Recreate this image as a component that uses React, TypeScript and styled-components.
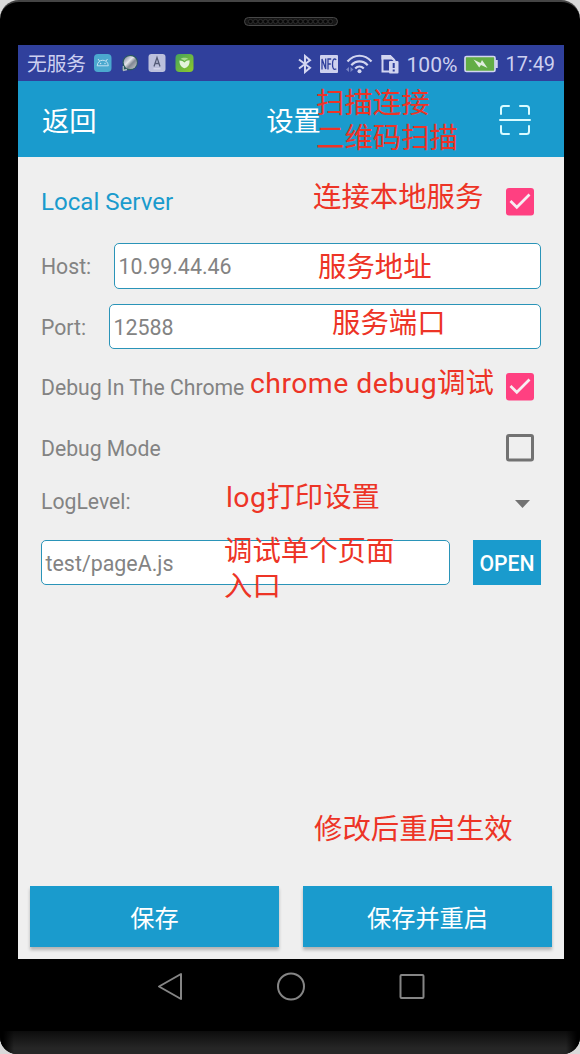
import React from 'react';
import styled, { createGlobalStyle } from 'styled-components';

const BLUE = '#1a9bcd';
const CJK = "Roboto, 'Noto Sans CJK SC', sans-serif";

const GlobalStyle = createGlobalStyle`
  * { box-sizing: border-box; }
  body { margin: 0; background: #d9d9d9; }
  svg { display: block; flex: none; }
`;

const Phone = styled.main`
  position: relative;
  width: 580px;
  height: 1054px;
  display: flex;
  flex-direction: column;
  overflow: hidden;
  background: #000;
  border-top: 2px solid #444;
  border-radius: 19px 19px 17px 17px;
  font-family: ${CJK};
`;

const Earpiece = styled.div`
  height: 43px;
  display: flex;
  justify-content: center;
  padding-top: 15px;
  padding-left: 2px;
`;

const Screen = styled.section`
  width: 546px;
  height: 914px;
  margin-left: 18px;
  display: flex;
  flex-direction: column;
  background: #efefef;
`;

const StatusBar = styled.div`
  height: 36px;
  display: flex;
  justify-content: space-between;
  align-items: center;
  padding: 1px 9px 0 9px;
  background: #30409c;
  color: #cdd0f0;
  white-space: nowrap;
`;

const StatusGroup = styled.div<{ $gap: number }>`
  display: flex;
  align-items: center;
  gap: ${(p) => p.$gap}px;
`;

const Carrier = styled.span`
  font-size: 19.7px;
  line-height: 32px;
  padding-top: 2px;
  margin-right: -3px;
`;

const StatusText = styled.span<{ $size: number }>`
  font-size: ${(p) => p.$size}px;
  padding-top: 1px;
`;

const Header = styled.header`
  height: 76px;
  display: grid;
  grid-template-columns: 1fr auto 1fr;
  align-items: center;
  padding: 0 33px 0 24px;
  background: ${BLUE};
  color: #fff;
  font-size: 27.3px;
`;

const Title = styled.span`
  margin-left: 14px;
`;

const ScanSlot = styled.div`
  justify-self: end;
  padding-top: 1px;
`;

const Form = styled.div`
  flex: 1;
  padding: 15px 23px 0;
  display: flex;
  flex-direction: column;
`;

const Row = styled.div<{ $height: number; $top?: number; $end?: number }>`
  height: ${(p) => p.$height}px;
  margin-top: ${(p) => p.$top ?? 0}px;
  padding-right: ${(p) => p.$end ?? 0}px;
  display: flex;
  align-items: center;
  justify-content: space-between;
`;

const Label = styled.label<{ $heading?: boolean }>`
  color: ${(p) => (p.$heading ? BLUE : '#838383')};
  font-size: ${(p) => (p.$heading ? 24.1 : 21.2)}px;
  padding-top: ${(p) => (p.$heading ? 0 : 1)}px;
  white-space: nowrap;
`;

const Field = styled.div<{ $width: number }>`
  width: ${(p) => p.$width}px;
  height: 100%;
  display: flex;
  align-items: center;
  padding: 1px 0 0 3.5px;
  background: #fff;
  border: 1.5px solid #2a94b8;
  border-radius: 5px;
  color: #838383;
  font-size: 21.4px;
`;

const OpenButton = styled.button`
  width: 68px;
  height: 45px;
  padding: 1px 0 0;
  border: 0;
  background: ${BLUE};
  color: #fff;
  font: 500 21.2px ${CJK};
`;

const Footer = styled.footer`
  display: flex;
  gap: 24px;
  padding: 0 12px 12px;
`;

const ActionButton = styled.button`
  flex: 1;
  height: 61px;
  border: 0;
  padding: 0 0 1px;
  background: ${BLUE};
  box-shadow: 0 3px 3px rgba(0, 0, 0, 0.25);
  color: #fff;
  font: 400 24.2px ${CJK};
`;

const NavBar = styled.nav`
  height: 72px;
  display: flex;
  justify-content: center;
  gap: 94px;
  padding-top: 12px;
  padding-left: 2px;
`;

const Chin = styled.div`
  flex: 1;
  background:
    linear-gradient(90deg, #000 3px, transparent 14px, transparent 566px, #000 577px),
    linear-gradient(#0c0c0c, #262626 75%);
`;

const Note = styled.p<{ $x: number; $y: number }>`
  position: absolute;
  left: ${(p) => p.$x}px;
  top: ${(p) => p.$y - 5}px;
  margin: 0;
  color: #ed3426;
  font: 400 28.4px/35px 'Noto Sans CJK SC', sans-serif;
  white-space: pre;
`;

const Latin = styled.span`
  font-family: Roboto, sans-serif;
  font-size: 28.4px;
  letter-spacing: 0.45px;
`;

function Speaker() {
  return (
    <svg width="94" height="9" viewBox="0 0 94 9">
      <rect x=".5" y=".5" width="93" height="8" rx="4" fill="#161616" stroke="#484848" />
      {Array.from({ length: 17 }, (_, i) => (
        <circle key={i} cx={6.5 + i * 5} cy="4.5" r="2.1" fill="#060606" stroke="#333" strokeWidth=".8" />
      ))}
    </svg>
  );
}

function AppIcons() {
  return (
    <svg width="101" height="20" viewBox="0 0 101 20">
      <defs>
        <linearGradient id="metal" x1="0" y1="0" x2="1" y2="1">
          <stop offset="0" stopColor="#6d7390" />
          <stop offset=".4" stopColor="#e4e6ea" />
          <stop offset=".6" stopColor="#808792" />
          <stop offset="1" stopColor="#cdd1d4" />
        </linearGradient>
        <linearGradient id="leaf" x1="0" y1="0" x2="1" y2="1">
          <stop offset="0" stopColor="#46a35c" />
          <stop offset="1" stopColor="#8fc92a" />
        </linearGradient>
      </defs>
      <rect x="1" y="0" width="17.5" height="18" rx="4" fill="#4ba9cf" />
      <path d="M4.200 11.800c.3-7.400 10.800-7.400 11.100 0zM6.500 7 5 5M13 7l1.500-2" fill="none" stroke="#c2e2f2" strokeWidth="1" />
      <circle cx="7.600" cy="9.500" r=".7" fill="#c2e2f2" />
      <circle cx="12" cy="9.500" r=".7" fill="#c2e2f2" />
      <path d="M29 16.500 30 11C28 5 33 .5 38.500 1c5.500.6 7.500 6 5.600 10.500-2 5-8 5.500-10.500 4.200z" fill="#2b5c5c" />
      <circle cx="37.300" cy="8.500" r="6.600" fill="url(#metal)" />
      <path d="M30.300 12v4.500M30 16.500l4-1" stroke="#aeb7c3" strokeWidth="1.300" />
      <rect x="55.500" y="0" width="17" height="18" rx="3" fill="#bcc0dc" />
      <path d="m61 12.500 3-9 3 9M62 9.500h4" fill="none" stroke="#555c78" strokeWidth="1.300" />
      <path d="M60.500 14.800h7" stroke="#dedff0" />
      <rect x="82.500" y="0" width="18" height="18" rx="4" fill="url(#leaf)" />
      <path d="M86.500 6.500c2.500 0 3.500.8 5 2 1.500-1.800 2.500-2.200 5-2.300.5 4-1.300 7-5 8-3.700-1-5.200-4-5-7.700z" fill="#e4f4dc" />
      <path d="M87.500 5c1.500-1.500 6-1.700 8 0-1.500.2-3 .8-4 2-1-1-2.500-1.800-4-2z" fill="#a8db8e" />
    </svg>
  );
}

function Bluetooth() {
  return (
    <svg width="16" height="20" viewBox="0 0 16 20">
      <path d="m2 5.500 11 8.300L8 18V2l5 4.200L2 14.500" fill="none" stroke="#d2d5f0" strokeWidth="2" />
    </svg>
  );
}

function Nfc() {
  return (
    <svg width="18" height="18" viewBox="0 0 18 18">
      <rect width="18" height="18" rx="1" fill="#ced1ee" />
      <path d="M2 14.500V4l3.700 10V3.500M8 14.500V4h3.200M8 9h2.800M16.300 4.700c-2.600-2-3.800.5-3.800 4.500s1.200 6.400 3.800 4.500" fill="none" stroke="#30409c" strokeWidth="1.300" />
    </svg>
  );
}

function Wifi() {
  return (
    <svg width="28" height="20" viewBox="0 0 28 20">
      <g fill="none" stroke="#d2d5f0" strokeWidth="2.200">
        <path d="M2.500 7.500c7-7.700 17-7.700 24 0M6.300 11.200c4.800-5 11.600-5 16.400 0M10.200 14.500c2.500-2.500 6-2.500 8.600 0" />
      </g>
      <circle cx="14.500" cy="17.300" r="2" fill="#d2d5f0" />
      <path d="M4 13v5l-3-2.500zM5.500 13v5l3-2.500z" fill="#7783c3" />
    </svg>
  );
}

function SimAlert() {
  return (
    <svg width="19" height="20" viewBox="0 0 19 20">
      <path d="M9 17.500H2.500V2h7.500L14.500 6.500V8" fill="none" stroke="#d2d5f0" strokeWidth="2" />
      <path d="M1.500 1h9l4.500 4.500H1.500z" fill="#d2d5f0" />
      <rect x="9" y="7" width="9.500" height="12.500" rx="1" fill="#d2d5f0" />
      <path d="M13.700 9v5M13.700 15.500v2" stroke="#30409c" strokeWidth="2" />
    </svg>
  );
}

function Battery() {
  return (
    <svg width="34" height="18" viewBox="0 0 34 18">
      <rect x="1" y="1.500" width="30" height="15" rx="1.500" fill="#62ad45" stroke="#d2d5f0" strokeWidth="1.700" />
      <path d="M32.500 5v8" stroke="#d2d5f0" strokeWidth="2.500" />
      <path d="m9.500 4.500 7 3.500L18 5l5.500 8-6.500-3-1.800 2.500z" fill="#dfeddd" />
    </svg>
  );
}

function ScanIcon() {
  return (
    <svg width="32" height="32" viewBox="0 0 32 32" fill="none" stroke="#d8fbff" strokeWidth="2" strokeLinecap="round">
      <path d="M2 10V4.500C2 3 3 2 4.500 2H10M21 2h6.500C29 2 30 3 30 4.500V10M2 22v5.500C2 29 3 30 4.500 30H10M21 30h6.500c1.500 0 2.500-1 2.500-2.500V22M1 16h30" />
    </svg>
  );
}

function Checkbox({ checked = false }: { checked?: boolean }) {
  return (
    <svg width="28" height="28" viewBox="0 0 28 28">
      {checked ? (
        <>
          <rect width="28" height="27.500" rx="3" fill="#ff4081" />
          <path d="m4.500 13 6.300 6.300L23.500 6.500" fill="none" stroke="#f7eef2" strokeWidth="2.700" />
        </>
      ) : (
        <rect x="1.500" y="1.500" width="25" height="24.500" rx="1.500" fill="none" stroke="#727272" strokeWidth="3" />
      )}
    </svg>
  );
}

const Caret = styled.svg`
  margin-top: 5px;
`;

export default function App() {
  return (
    <>
      <GlobalStyle />
      <Phone>
        <Earpiece><Speaker /></Earpiece>
        <Screen>
          <StatusBar>
            <StatusGroup $gap={10}>
              <Carrier>无服务</Carrier>
              <AppIcons />
            </StatusGroup>
            <StatusGroup $gap={7}>
              <Bluetooth />
              <Nfc />
              <Wifi />
              <SimAlert />
              <StatusText $size={21.1}>100%</StatusText>
              <Battery />
              <StatusText $size={19.9}>17:49</StatusText>
            </StatusGroup>
          </StatusBar>
          <Header>
            <span>返回</span>
            <Title>设置</Title>
            <ScanSlot><ScanIcon /></ScanSlot>
          </Header>
          <Form>
            <Row $height={60} $end={7}>
              <Label $heading>Local Server</Label>
              <Checkbox checked />
            </Row>
            <Row $height={46} $top={11}>
              <Label>Host:</Label>
              <Field $width={427}>10.99.44.46</Field>
            </Row>
            <Row $height={45} $top={15}>
              <Label>Port:</Label>
              <Field $width={432}>12588</Field>
            </Row>
            <Row $height={60} $top={8} $end={7}>
              <Label>Debug In The Chrome</Label>
              <Checkbox checked />
            </Row>
            <Row $height={61} $end={7}>
              <Label>Debug Mode</Label>
              <Checkbox />
            </Row>
            <Row $height={46} $end={11}>
              <Label>LogLevel:</Label>
              <Caret width="15" height="8" viewBox="0 0 15 8"><path d="M0 0h15L7.500 8z" fill="#727272" /></Caret>
            </Row>
            <Row $height={45} $top={16}>
              <Field $width={409}>test/pageA.js</Field>
              <OpenButton>OPEN</OpenButton>
            </Row>
          </Form>
          <Footer>
            <ActionButton>保存</ActionButton>
            <ActionButton>保存并重启</ActionButton>
          </Footer>
        </Screen>
        <NavBar>
          <svg width="28" height="30" viewBox="0 0 28 30"><path d="M4 15.500 26 3v25z" fill="none" stroke="#858585" strokeWidth="2" strokeLinejoin="round" /></svg>
          <svg width="28" height="30" viewBox="0 0 28 30"><circle cx="14" cy="15.500" r="13" fill="none" stroke="#858585" strokeWidth="2" /></svg>
          <svg width="28" height="30" viewBox="0 0 28 30"><rect x="1.500" y="4" width="23" height="23" rx="1" fill="none" stroke="#858585" strokeWidth="2" /></svg>
        </NavBar>
        <Chin />
        <Note $x={316} $y={86}>{'扫描连接\n二维码扫描'}</Note>
        <Note $x={313} $y={180}>连接本地服务</Note>
        <Note $x={318} $y={250}>服务地址</Note>
        <Note $x={332} $y={306}>服务端口</Note>
        <Note $x={250} $y={366}><Latin>chrome debug</Latin>调试</Note>
        <Note $x={226} $y={480}><Latin>log</Latin>打印设置</Note>
        <Note $x={224} $y={534}>{'调试单个页面\n入口'}</Note>
        <Note $x={314} $y={812}>修改后重启生效</Note>
      </Phone>
    </>
  );
}
